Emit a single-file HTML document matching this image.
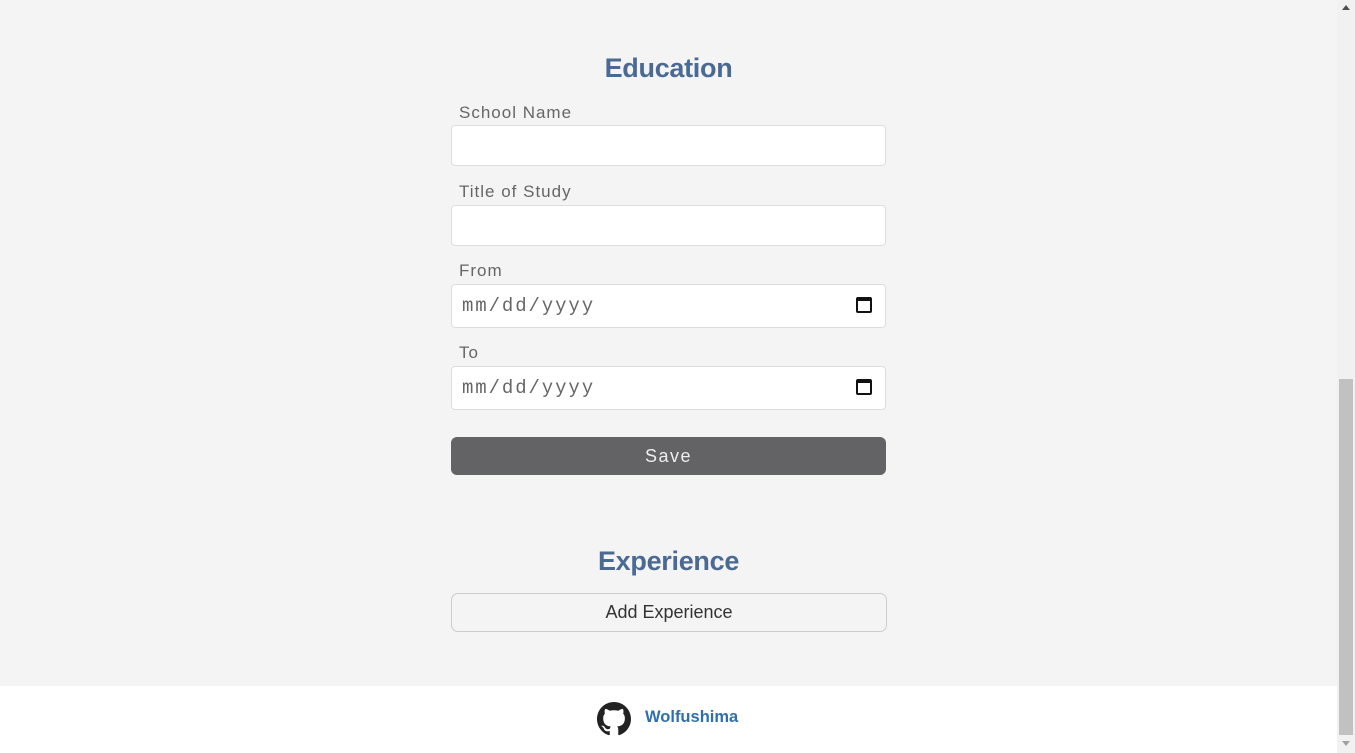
<!DOCTYPE html>
<html><head><style>
*{box-sizing:border-box;margin:0;padding:0}
body{width:1355px;height:753px;overflow:hidden;background:#f4f4f4;font-family:"Liberation Sans",sans-serif;position:relative}
.a{position:absolute}
h2{position:absolute;left:451px;width:435px;text-align:center;color:#4a6a94;font-size:27px;font-weight:bold;letter-spacing:-0.3px}
.lbl{position:absolute;left:459px;color:#666;font-size:17px;letter-spacing:1px}
.in{position:absolute;left:451px;width:435px;background:#fff;border:1px solid #ddd;border-radius:4px}
.date{font-family:"Liberation Mono",monospace;font-size:19px;color:#666;padding-left:10px;display:flex;align-items:center;letter-spacing:1.9px}
.cal{position:absolute;right:13px;top:12px;width:16px;height:16px;border:2px solid #111;border-top-width:4px;border-radius:2px}
</style></head><body>
<h2 style="top:53px">Education</h2>
<div class="lbl" style="top:103px">School Name</div>
<div class="in" style="top:125px;height:41px"></div>
<div class="lbl" style="top:182px">Title of Study</div>
<div class="in" style="top:205px;height:41px"></div>
<div class="lbl" style="top:261px">From</div>
<div class="in date" style="top:284px;height:44px">mm/dd/yyyy<div class="cal"></div></div>
<div class="lbl" style="top:343px">To</div>
<div class="in date" style="top:366px;height:44px">mm/dd/yyyy<div class="cal"></div></div>
<div class="a" style="left:451px;top:437px;width:435px;height:38px;background:#636365;border-radius:6px;color:#eee;font-size:18px;letter-spacing:1.5px;text-align:center;line-height:38px">Save</div>
<h2 style="top:546px">Experience</h2>
<div class="a" style="left:451px;top:593px;width:436px;height:39px;border:1px solid #ccc;border-radius:7px;color:#333;font-size:18px;text-align:center;line-height:37px">Add Experience</div>
<div class="a" style="left:0;top:686px;width:1337px;height:67px;background:#fff"></div>
<svg class="a" style="left:597px;top:702px" width="34" height="34" viewBox="0 0 16 16"><path fill="#222" d="M8 0C3.58 0 0 3.58 0 8c0 3.54 2.29 6.53 5.47 7.59.4.07.55-.17.55-.38 0-.19-.01-.82-.01-1.49-2.01.37-2.53-.49-2.69-.94-.09-.23-.48-.94-.82-1.13-.28-.15-.68-.52-.01-.53.63-.01 1.08.58 1.23.82.72 1.21 1.87.87 2.33.66.07-.52.28-.87.51-1.07-1.78-.2-3.64-.89-3.64-3.95 0-.87.31-1.59.82-2.15-.08-.2-.36-1.02.08-2.12 0 0 .67-.21 2.2.82.64-.18 1.32-.27 2-.27.68 0 1.36.09 2 .27 1.53-1.04 2.2-.82 2.2-.82.44 1.1.16 1.92.08 2.12.51.56.82 1.27.82 2.15 0 3.07-1.87 3.75-3.65 3.95.29.25.54.73.54 1.48 0 1.07-.01 1.93-.01 2.2 0 .21.15.46.55.38A8.013 8.013 0 0016 8c0-4.42-3.58-8-8-8z"/></svg>
<div class="a" style="left:645px;top:708px;color:#2f6fad;font-size:16.5px;font-weight:bold">Wolfushima</div>
<div class="a" style="left:1337px;top:0;width:18px;height:753px;background:#f1f1f1"></div>
<div class="a" style="left:1339px;top:379px;width:14px;height:356px;background:#c1c1c1"></div>
<div class="a" style="left:1342px;top:5px;width:0;height:0;border-left:4px solid transparent;border-right:4px solid transparent;border-bottom:5px solid #505050"></div>
<div class="a" style="left:1342px;top:741px;width:0;height:0;border-left:4px solid transparent;border-right:4px solid transparent;border-top:5px solid #a0a0a0"></div>
</body></html>
